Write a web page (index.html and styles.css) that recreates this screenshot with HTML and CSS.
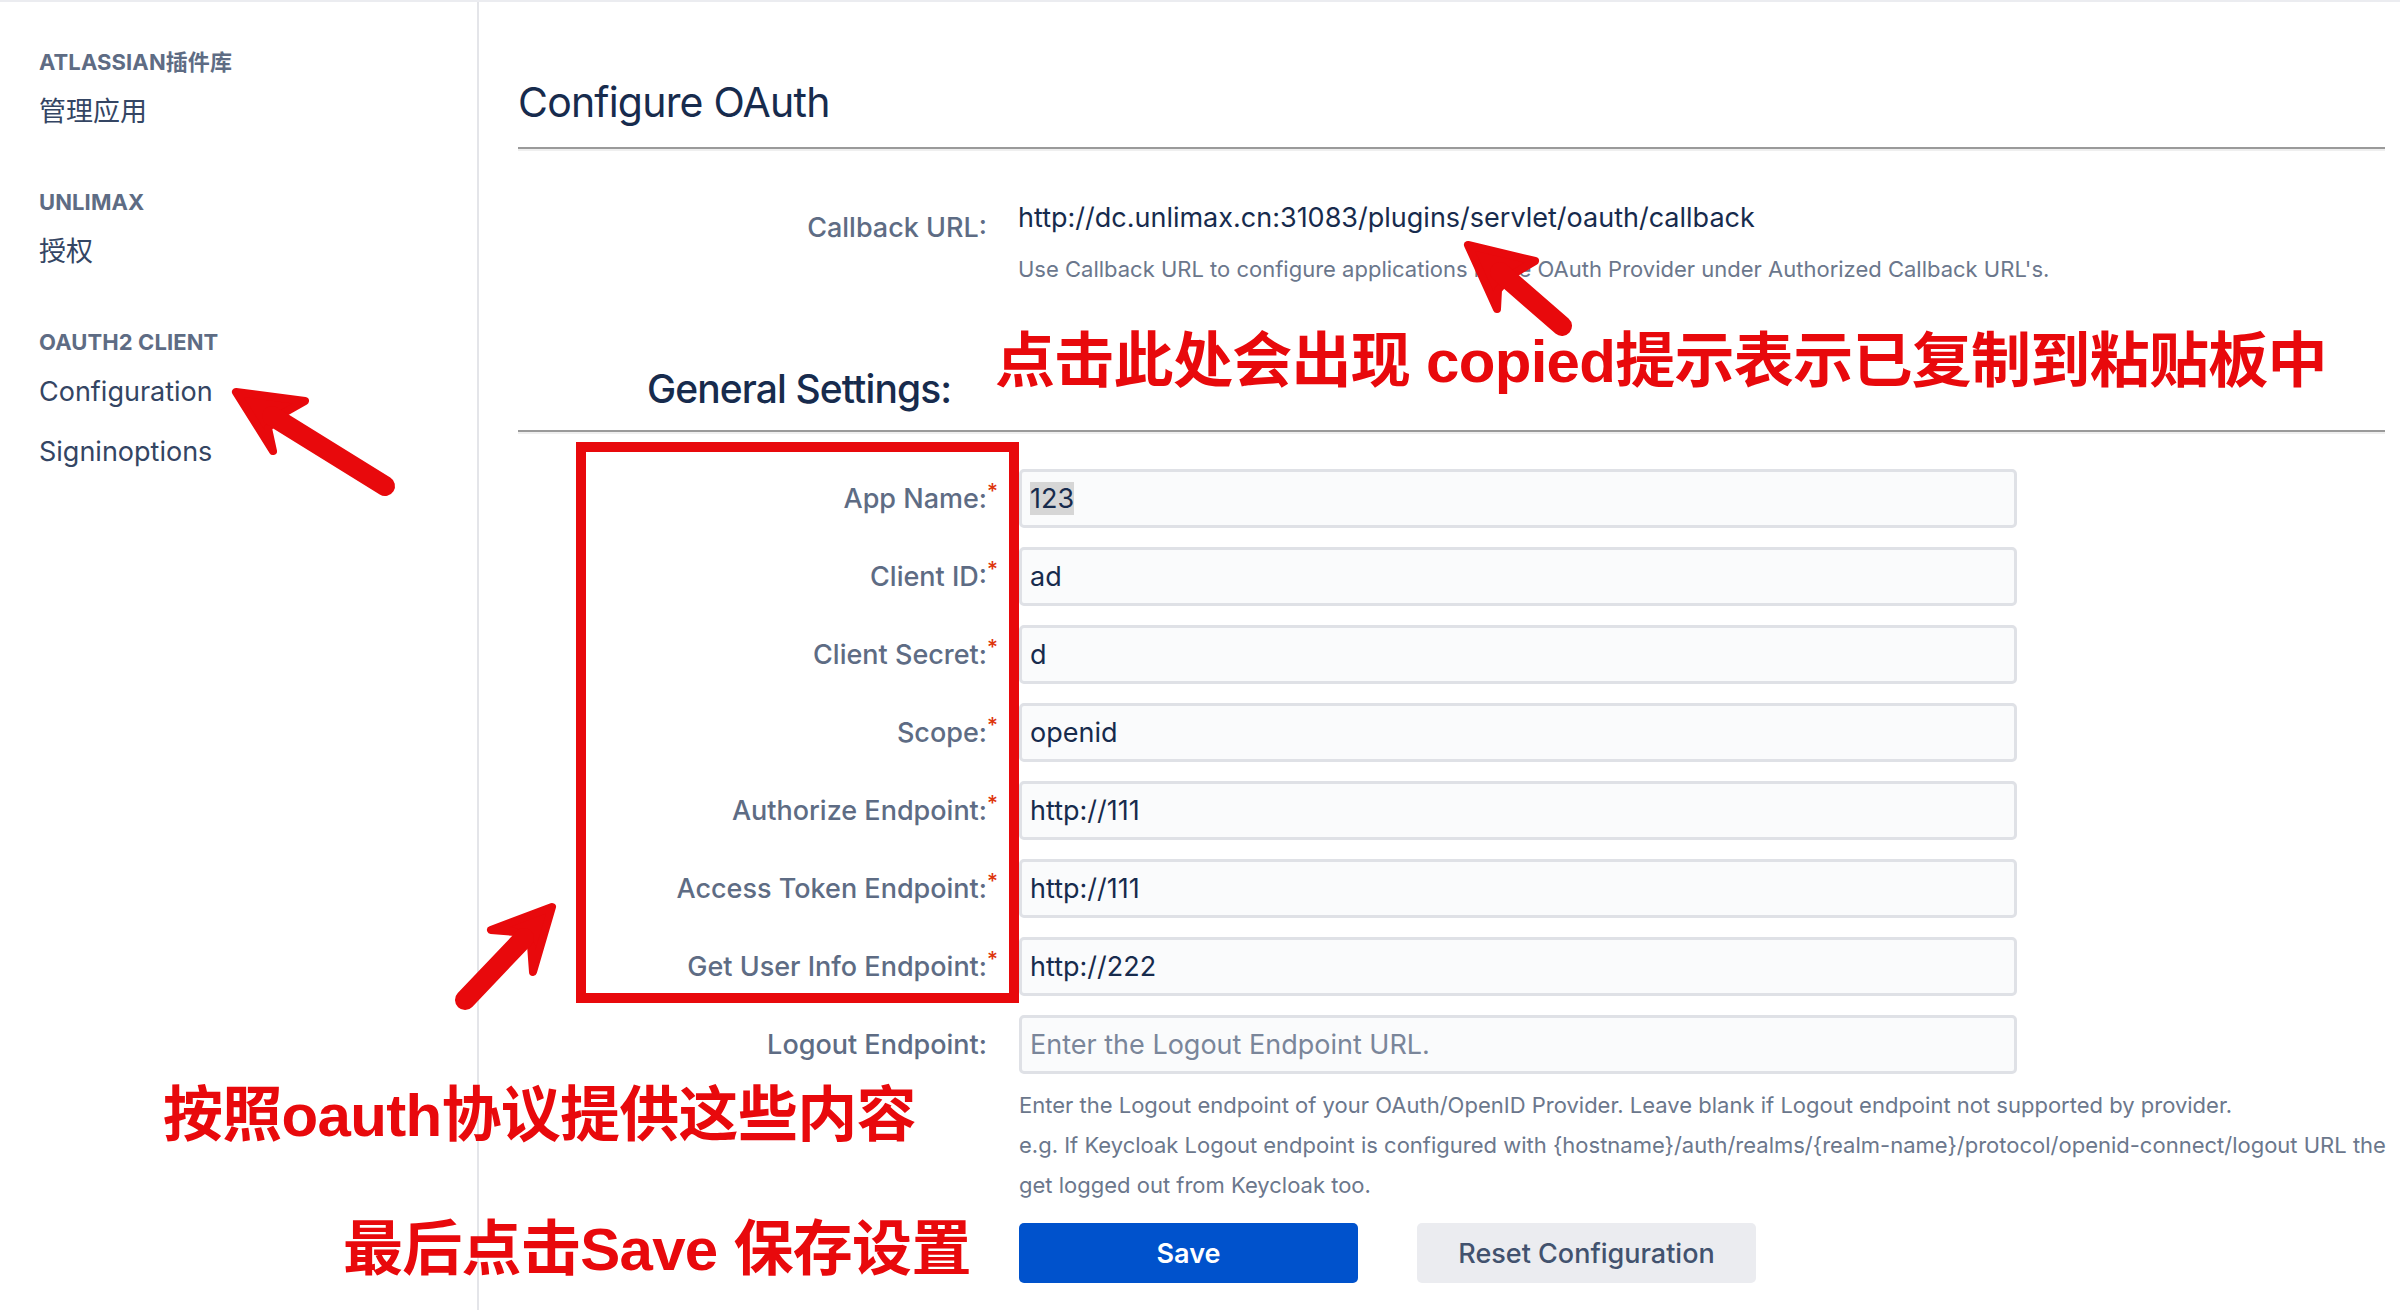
FILE: index.html
```html
<!DOCTYPE html>
<html lang="zh-CN">
<head>
<meta charset="utf-8">
<title>Configure OAuth</title>
<link rel="stylesheet" href="styles.css">
</head>
<body>
<div class="page">
  <aside class="sidebar">
    <section class="nav-group">
      <h3 class="nav-heading">ATLASSIAN插件库</h3>
      <a class="nav-item">管理应用</a>
    </section>
    <section class="nav-group">
      <h3 class="nav-heading">UNLIMAX</h3>
      <a class="nav-item">授权</a>
    </section>
    <section class="nav-group">
      <h3 class="nav-heading">OAUTH2 CLIENT</h3>
      <a class="nav-item">Configuration</a>
      <a class="nav-item">Signinoptions</a>
    </section>
  </aside>

  <main class="main">
    <h1 class="title">Configure OAuth</h1>
    <hr class="rule">

    <div class="callback">
      <div class="callback-label">Callback URL:</div>
      <div class="callback-value">
        <div class="callback-url">http://dc.unlimax.cn:31083/plugins/servlet/oauth/callback</div>
        <div class="callback-help">Use Callback URL to configure applications in the OAuth Provider under Authorized Callback URL's.</div>
      </div>
    </div>

    <h2 class="section-title">General Settings:</h2>
    <hr class="rule rule-tight">

    <form class="form">
      <label class="form-label">App Name:<span class="req">*</span></label>
      <div class="field"><span class="sel">123</span></div>

      <label class="form-label">Client ID:<span class="req">*</span></label>
      <div class="field">ad</div>

      <label class="form-label">Client Secret:<span class="req">*</span></label>
      <div class="field">d</div>

      <label class="form-label">Scope:<span class="req">*</span></label>
      <div class="field">openid</div>

      <label class="form-label">Authorize Endpoint:<span class="req">*</span></label>
      <div class="field">http://111</div>

      <label class="form-label">Access Token Endpoint:<span class="req">*</span></label>
      <div class="field">http://111</div>

      <label class="form-label">Get User Info Endpoint:<span class="req">*</span></label>
      <div class="field">http://222</div>

      <label class="form-label">Logout Endpoint:</label>
      <div class="field placeholder">Enter the Logout Endpoint URL.</div>

      <div class="form-help">
        <div>Enter the Logout endpoint of your OAuth/OpenID Provider. Leave blank if Logout endpoint not supported by provider.</div>
        <div>e.g. If Keycloak Logout endpoint is configured with {hostname}/auth/realms/{realm-name}/protocol/openid-connect/logout URL then users will</div>
        <div>get logged out from Keycloak too.</div>
      </div>

      <div class="actions">
        <button type="button" class="btn btn-primary">Save</button>
        <button type="button" class="btn btn-secondary">Reset Configuration</button>
      </div>
    </form>
  </main>

  <div class="annot-box"></div>
  <p class="annot annot-copy">点击此处会出现 copied提示表示已复制到粘贴板中</p>
  <p class="annot annot-fill">按照oauth协议提供这些内容</p>
  <p class="annot annot-save">最后点击Save 保存设置</p>

  <svg class="arrows" width="2400" height="1310" viewBox="0 0 2400 1310">
    <g fill="#e8090c" stroke="#e8090c" stroke-linejoin="round" stroke-linecap="round">
      <!-- arrow to Configuration -->
      <polygon points="236,392 305,401 282,414 268,428 273,451" stroke-width="8"/>
      <line x1="272" y1="416" x2="385" y2="486" stroke-width="20"/>
      <!-- arrow to callback url -->
      <polygon points="1468,245 1535,261 1510,276 1498,290 1497,309" stroke-width="8"/>
      <line x1="1500" y1="272" x2="1562" y2="326" stroke-width="20"/>
      <!-- arrow to red box -->
      <polygon points="552,907 491,930 515,932 531,945 533,972" stroke-width="8"/>
      <line x1="524" y1="938" x2="465" y2="1000" stroke-width="20"/>
    </g>
  </svg>
</div>
</body>
</html>
```

FILE: styles.css
```css
html, body {
  margin: 0;
  padding: 0;
  background: #ffffff;
  overflow: hidden;
}

body {
  font-family: Inter, "Noto Sans CJK SC", sans-serif;
  color: #172b4d;
}

.page {
  position: relative;
  display: flex;
  width: 2400px;
  height: 1310px;
  box-shadow: inset 0 2px 0 #ebecf0;
}

/* ---------- sidebar ---------- */
.sidebar {
  width: 479px;
  flex: none;
  box-sizing: border-box;
  padding: 46px 0 0 39px;
  border-right: 2px solid #e4e5e9;
  margin-top: 2px;
}

.nav-group + .nav-group {
  margin-top: 46px;
}

.nav-heading {
  margin: 0 0 6px;
  font-size: 22px;
  line-height: 28px;
  font-weight: 700;
  color: #5e6c84;
  letter-spacing: 0.1px;
}

.nav-item {
  display: block;
  padding: 10px 0;
  font-size: 27px;
  line-height: 40px;
  color: #344563;
}

/* ---------- main ---------- */
.main {
  flex: 1;
  min-width: 0;
  box-sizing: border-box;
  padding: 77px 15px 0 39px;
}

.title {
  margin: 0;
  font-size: 41px;
  line-height: 50px;
  font-weight: 400;
  letter-spacing: -0.8px;
  color: #172b4d;
}

.rule {
  margin: 20px 0 0;
  height: 0;
  border: 0;
  border-top: 2px solid #9a9a9a;
  border-bottom: 2px solid #efefef;
}

.rule-tight {
  margin-top: 17px;
}

.callback {
  display: grid;
  grid-template-columns: 482px 1fr;
  column-gap: 18px;
  margin-top: 47px;
}

.callback-label {
  padding: 10px 13px 0 0;
  text-align: right;
  font-size: 27px;
  line-height: 40px;
  font-weight: 500;
  color: #5e6c84;
}

.callback-url {
  font-size: 27px;
  line-height: 40px;
  color: #172b4d;
}

.callback-help {
  margin-top: 11px;
  font-size: 22px;
  line-height: 40px;
  color: #6b778c;
}

.section-title {
  margin: 76px 0 0 129px;
  font-size: 39px;
  line-height: 48px;
  font-weight: 500;
  letter-spacing: -0.9px;
  color: #172b4d;
}

/* ---------- form ---------- */
.form {
  display: grid;
  grid-template-columns: 482px 998px;
  column-gap: 19px;
  row-gap: 19px;
  margin-top: 35px;
}

.form-label {
  padding-right: 13px;
  text-align: right;
  font-size: 27px;
  line-height: 59px;
  font-weight: 500;
  color: #5e6c84;
}

.req {
  display: inline-block;
  width: 11px;
  margin-right: -11px;
  text-align: left;
  font-size: 21px;
  line-height: 21px;
  vertical-align: 9px;
  color: #de350b;
}

.field {
  height: 59px;
  box-sizing: border-box;
  padding: 0 8px;
  border: 3px solid #dfe1e6;
  border-radius: 5px;
  background: #fafbfc;
  font-size: 27px;
  line-height: 53px;
  color: #172b4d;
  white-space: nowrap;
  overflow: hidden;
}

.placeholder {
  color: #7a869a;
}

.sel {
  background: #d6d6d6;
}

.form-help {
  grid-column: 2;
  width: 1367px;
  margin-top: -8px;
  font-size: 22px;
  line-height: 40px;
  color: #6b778c;
  white-space: nowrap;
  overflow: hidden;
}

.actions {
  grid-column: 2;
  display: flex;
  gap: 59px;
  margin-top: -1px;
}

.btn {
  width: 339px;
  height: 60px;
  border: 0;
  border-radius: 5px;
  font-family: Inter, sans-serif;
  font-size: 27px;
  cursor: pointer;
}

.btn-primary {
  background: #0052cc;
  color: #ffffff;
  font-weight: 600;
}

.btn-secondary {
  background: #ebecf0;
  color: #42526e;
  font-weight: 500;
}

/* ---------- annotations (overlay) ---------- */
.annot-box {
  position: absolute;
  left: 576px;
  top: 442px;
  width: 443px;
  height: 561px;
  box-sizing: border-box;
  border: 10px solid #e8090c;
}

.annot {
  position: absolute;
  margin: 0;
  font-family: "Liberation Sans", "Noto Sans CJK SC", sans-serif;
  font-weight: 700;
  font-size: 60px;
  line-height: 60px;
  color: #e8090c;
  white-space: nowrap;
  letter-spacing: -0.7px;
}

.annot-copy {
  left: 995px;
  top: 332px;
}

.annot-fill {
  left: 163px;
  top: 1086px;
}

.annot-save {
  left: 343px;
  top: 1220px;
}

.arrows {
  position: absolute;
  left: 0;
  top: 0;
  pointer-events: none;
}
```
